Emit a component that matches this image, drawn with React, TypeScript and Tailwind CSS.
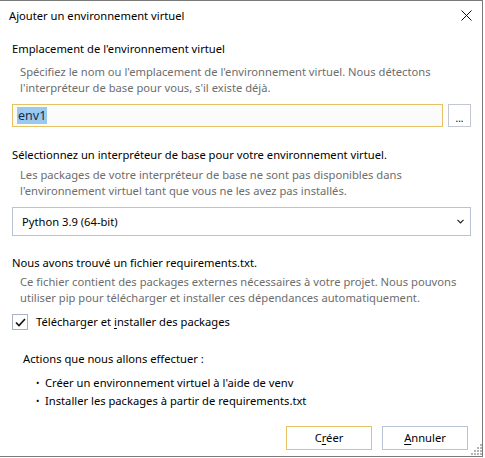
import React from "react";

const font = { fontFamily: '"Noto Sans", "Open Sans", sans-serif' };

function Grip() {
  const dots: [number, number][] = [];
  for (let r = 0; r < 4; r++) {
    for (let c = 3 - r; c < 4; c++) {
      dots.push([c * 3 + 1, r * 3 + 1]);
    }
  }
  return (
    <svg width="12" height="12" viewBox="0 0 12 12">
      {dots.map(([x, y], i) => (
        <rect key={i} x={x} y={y} width="2" height="2" fill="#b5b5b5" />
      ))}
    </svg>
  );
}

export default function App() {
  return (
    <div className="w-[485px] h-[458px] bg-white relative overflow-hidden text-[11.2px] leading-[16px] text-black whitespace-nowrap" style={font}>
      <div className="w-[483px] h-[457px] border-t border-r border-b border-[#7a7a7a] bg-white flex flex-col relative overflow-hidden">
        {/* title bar */}
        <div className="h-[29px] shrink-0 flex items-center justify-between pl-[9px] pr-[10px]">
          <span>Ajouter un environnement virtuel</span>
          <svg width="11" height="11" viewBox="0 0 11 11">
            <path d="M0.5 0.5 L10.5 10.5 M10.5 0.5 L0.5 10.5" stroke="#111" strokeWidth="1" />
          </svg>
        </div>

        <div className="pl-[12px] pr-[11px] flex flex-col shrink-0">
          <div className="mt-[11px]">Emplacement de l'environnement virtuel</div>
          <div className="mt-[7px] pl-[8px] text-[#6d6d6d]">
            Spécifiez le nom ou l'emplacement de l'environnement virtuel. Nous détectons
            <br />
            l'interpréteur de base pour vous, s'il existe déjà.
          </div>

          <div className="mt-[8px] flex gap-[5px]">
            <div className="flex-1 h-[23px] border border-[#e5c365] bg-[#fbfbfb] flex items-center pl-[4px]">
              <span className="bg-[#99c9ef] text-[#1b2a4a] px-[1px] leading-[17px] text-[12.5px]">env1</span>
            </div>
            <div className="w-[23px] h-[23px] border border-[#c3c7d2] bg-white flex items-end justify-center pb-[3px]">
              <span className="text-[10px] leading-[10px]">...</span>
            </div>
          </div>

          <div className="mt-[20px]">Sélectionnez un interpréteur de base pour votre environnement virtuel.</div>
          <div className="mt-[4px] pl-[8px] text-[#6d6d6d]">
            Les packages de votre interpréteur de base ne sont pas disponibles dans
            <br />
            l'environnement virtuel tant que vous ne les avez pas installés.
          </div>

          <div className="mt-[8px] h-[29px] border border-[#b9c3d6] bg-white flex items-center justify-between pl-[9px] pr-[6px]">
            <span>Python 3.9 (64-bit)</span>
            <svg width="7" height="5" viewBox="0 0 7 5">
              <path d="M0.5 0.8 L3.5 3.8 L6.5 0.8" stroke="#222" strokeWidth="1.2" fill="none" />
            </svg>
          </div>

          <div className="mt-[19px]">Nous avons trouvé un fichier requirements.txt.</div>
          <div className="mt-[3px] pl-[8px] text-[#6d6d6d]">
            Ce fichier contient des packages externes nécessaires à votre projet. Nous pouvons
            <br />
            utiliser pip pour télécharger et installer ces dépendances automatiquement.
          </div>

          <div className="mt-[8px] flex items-center gap-[8px]">
            <div className="w-[16px] h-[16px] border border-[#a9b1c2] bg-white flex items-center justify-center">
              <svg width="11" height="9" viewBox="0 0 11 9">
                <path d="M1 4.5 L4 7.5 L10 1" stroke="#111" strokeWidth="1.6" fill="none" />
              </svg>
            </div>
            <span>
              Télécharger et <span className="underline underline-offset-2">i</span>nstaller des packages
            </span>
          </div>

          <div className="mt-[21px] pl-[11px]">Actions que nous allons effectuer :</div>
          <div className="mt-[8px] pl-[24px] flex flex-col gap-[2px]">
            <div className="flex items-center">
              <span className="w-[9px] text-[9px]">•</span>
              <span>Créer un environnement virtuel à l'aide de venv</span>
            </div>
            <div className="flex items-center">
              <span className="w-[9px] text-[9px]">•</span>
              <span>Installer les packages à partir de requirements.txt</span>
            </div>
          </div>

          <div className="mt-[17px] flex justify-end gap-[10px] pr-[3px]">
            <div className="w-[86px] h-[24px] border border-[#e5c365] bg-white flex items-center justify-center">
              <span>
                C<span className="underline underline-offset-2">r</span>éer
              </span>
            </div>
            <div className="w-[86px] h-[24px] border border-[#b9c3d6] bg-white flex items-center justify-center">
              <span>
                <span className="underline underline-offset-2">A</span>nnuler
              </span>
            </div>
          </div>
        </div>

        <div className="absolute right-[0px] bottom-[1px]">
          <Grip />
        </div>
      </div>
    </div>
  );
}
